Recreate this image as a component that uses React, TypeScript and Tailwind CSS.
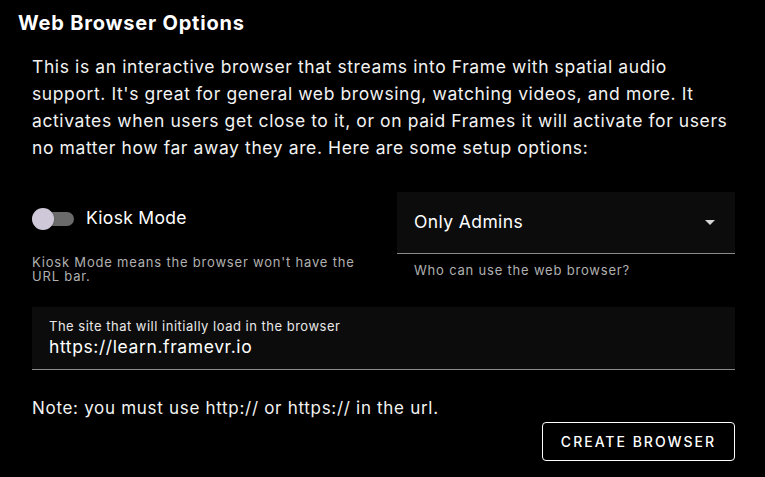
import { useState } from "react";

export default function App() {
  const [kiosk, setKiosk] = useState(false);

  return (
    <div
      className="min-h-screen w-full bg-black text-white"
      style={{ fontFamily: "Inter, 'Noto Sans', sans-serif" }}
    >
      <div className="pl-[18px] pr-[30px] pt-[11px]">
        {/* Header */}
        <h1 className="text-[20px] leading-6 font-bold tracking-[0.8px]">
          Web Browser Options
        </h1>

        <div className="pl-[14px]">
          {/* Intro */}
          <p className="mt-[18px] text-[17.5px] leading-[27px] tracking-[0.6px] text-[#f2f2f2] whitespace-nowrap">
            This is an interactive browser that streams into Frame with spatial audio
            <br />
            support. It's great for general web browsing, watching videos, and more. It
            <br />
            activates when users get close to it, or on paid Frames it will activate for users
            <br />
            no matter how far away they are. Here are some setup options:
          </p>

          {/* Kiosk + who can use */}
          <div className="mt-[31px] flex">
            <div className="w-[365px] shrink-0">
              <div className="flex items-center h-[52px] pt-[1px]">
                <button
                  onClick={() => setKiosk(!kiosk)}
                  className="relative w-[42px] h-[22px] flex items-center"
                >
                  <span className="absolute left-[8px] right-0 h-[14px] rounded-full bg-[#6a6a6a]" />
                  <span
                    className={`absolute h-[22px] w-[22px] rounded-full bg-[#cfc8d8] shadow ${
                      kiosk ? "left-[20px]" : "left-0"
                    }`}
                  />
                </button>
                <span className="ml-[12px] text-[17.5px] tracking-[0.3px]">Kiosk Mode</span>
              </div>
              <p className="mt-[11px] pr-[30px] text-[13px] leading-[14px] tracking-[0.8px] text-[#b0b0b0]">
                Kiosk Mode means the browser won't have the URL bar.
              </p>
            </div>

            <div className="flex-1">
              <div className="h-[62px] bg-[#0c0c0c] border-b border-[#8a8a8a] flex items-center justify-between pl-[17px] pr-[20px]">
                <span className="text-[17.5px] tracking-[0.4px]">Only Admins</span>
                <svg width="10" height="5" viewBox="0 0 10 5">
                  <path d="M0 0 L10 0 L5 5 Z" fill="#d6d6d6" />
                </svg>
              </div>
              <p className="mt-[9px] pl-[17px] text-[13px] leading-[14px] tracking-[0.8px] text-[#b0b0b0]">
                Who can use the web browser?
              </p>
            </div>
          </div>

          {/* Initial URL */}
          <div className="mt-[24px] h-[63px] bg-[#0c0c0c] border-b border-[#8a8a8a] pl-[17px] pt-[12px]">
            <div className="text-[13px] leading-[14px] tracking-[0.5px] text-[#e8e8e8]">
              The site that will initially load in the browser
            </div>
            <div className="mt-[3px] text-[17.5px] leading-[22px] tracking-[0.6px]">
              https://learn.framevr.io
            </div>
          </div>

          <p className="mt-[27px] text-[17px] leading-[22px] tracking-[0.7px] text-[#f2f2f2]">
            Note: you must use http:// or https:// in the url.
          </p>

          <div className="mt-[3px] flex justify-end">
            <button className="w-[193px] h-[39px] border border-white rounded-[4px] text-[14px] font-medium tracking-[2px] uppercase">
              Create Browser
            </button>
          </div>
        </div>
      </div>
    </div>
  );
}
